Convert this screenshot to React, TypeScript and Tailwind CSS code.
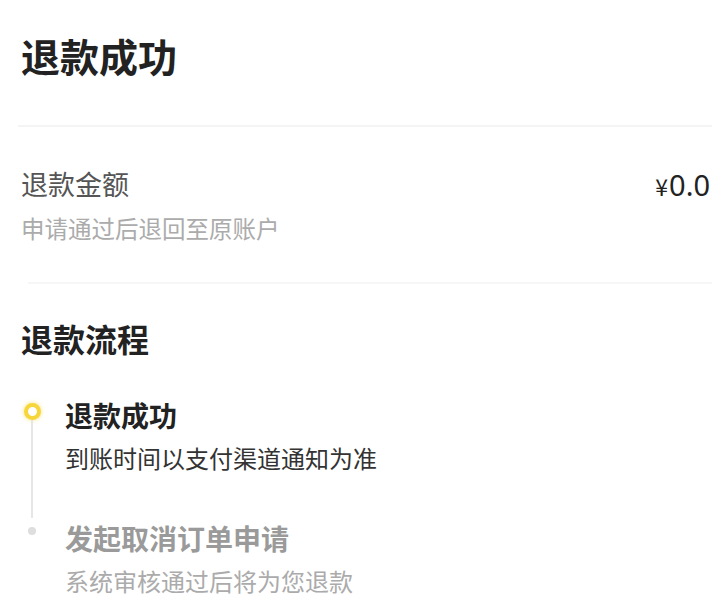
export default function App() {
  return (
    <div
      className="w-[726px] h-[604px] bg-white overflow-hidden"
      style={{ fontFamily: '"Noto Sans CJK SC", "Noto Sans", sans-serif' }}
    >
      {/* Header */}
      <div className="px-[21px] pt-[36px]">
        <h1 className="text-[39px] leading-[39px] font-bold text-[#222]">退款成功</h1>
      </div>
      <div className="mx-[18px] mt-[50px] mr-[14px] h-[2px] bg-[#f4f4f4]" />

      {/* Refund amount */}
      <div className="flex justify-between items-start pl-[21px] pr-[16px] pt-[43px]">
        <div>
          <div className="text-[27px] leading-[27px] text-[#555]">退款金额</div>
          <div className="mt-[19px] text-[23.5px] leading-[24px] text-[#ababab]">申请通过后退回至原账户</div>
        </div>
        <div className="flex items-baseline text-[#222] mt-[1px]">
          <span className="text-[23px] leading-[28px]">¥</span>
          <span
            className="text-[29px] leading-[28px] ml-[1px]"
            style={{ fontFamily: '"Noto Sans", sans-serif' }}
          >
            0.0
          </span>
        </div>
      </div>
      <div className="ml-[28px] mr-[14px] mt-[42px] h-[2px] bg-[#f6f6f6]" />

      {/* Refund process */}
      <div className="px-[21px] pt-[38px]">
        <h2 className="text-[32px] leading-[32px] font-bold text-[#222]">退款流程</h2>

        <div className="mt-[47px]">
          <div className="flex">
            <div className="w-[22px] flex flex-col items-center pt-[2px]">
              <div className="w-[17px] h-[17px] rounded-full border-[4px] border-[#f6d63a] bg-white shadow-[0_0_4px_rgba(246,214,58,0.7)]" />
              <div className="w-[2px] flex-1 bg-[#e6e6e6] mb-[6px]" />
            </div>
            <div className="ml-[22px] pb-[54px]">
              <div className="text-[28px] leading-[28px] font-bold text-[#222]">退款成功</div>
              <div className="mt-[17px] text-[24px] leading-[24px] text-[#333]">到账时间以支付渠道通知为准</div>
            </div>
          </div>

          <div className="flex">
            <div className="w-[22px] flex flex-col items-center pt-[3px]">
              <div className="w-[8px] h-[8px] rounded-full bg-[#dedede]" />
            </div>
            <div className="ml-[22px]">
              <div className="text-[28px] leading-[28px] font-bold text-[#9a9a9a]">发起取消订单申请</div>
              <div className="mt-[17px] text-[24px] leading-[24px] text-[#ababab]">系统审核通过后将为您退款</div>
            </div>
          </div>
        </div>
      </div>
    </div>
  );
}
